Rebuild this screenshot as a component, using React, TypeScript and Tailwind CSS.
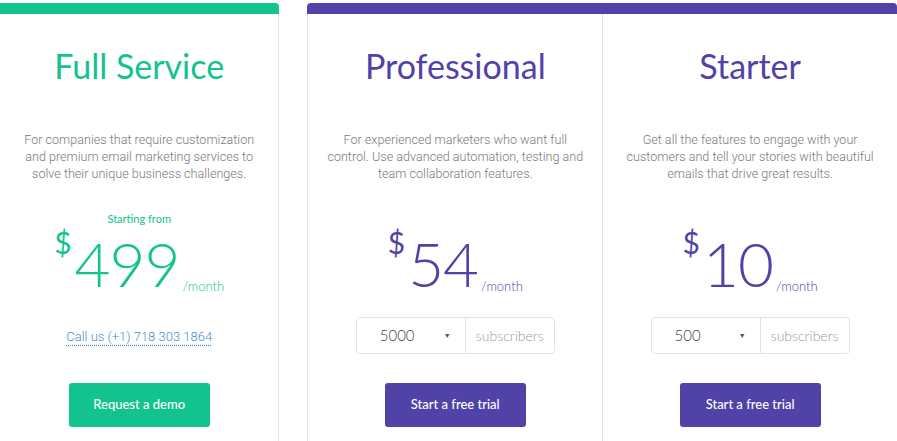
const heading = { fontFamily: 'Lato, "Noto Sans", sans-serif' };

type Plan = {
    title: string;
    lines: string[];
    price: string;
    tone: 'green' | 'purple';
    subs?: string;
};

function Price({ price, color }: { price: string; color: string }) {
    return (
        <div className={`flex items-start justify-center ${color}`} style={heading}>
            <span className="text-[30px] leading-none mr-[3px]">$</span>
            <span className="text-[62px] leading-none mt-[5px] font-light tracking-[-1px]">{price}</span>
            <span className="self-end text-[13px] leading-none mb-[1px] ml-[3px] font-light">/month</span>
        </div>
    );
}

function SubscriberSelect({ value }: { value: string }) {
    return (
        <div className="flex h-[37px] w-[199px] mx-auto border border-[#e3e3e3] rounded-[4px] text-[15px]" style={heading}>
            <div className="w-[109px] flex items-center justify-between pl-[23px] pr-[14px] border-r border-[#e3e3e3] text-[#444] font-light">
                <span>{value}</span>
                <span className="text-[7px] text-[#555]">▼</span>
            </div>
            <div className="flex-1 flex items-center justify-center text-[#999] text-[14px] font-light">subscribers</div>
        </div>
    );
}

function Column({ plan, extra }: { plan: Plan; extra?: boolean }) {
    const text = plan.tone === 'green' ? 'text-[#13c38e]' : 'text-[#5142a8]';
    const bg = plan.tone === 'green' ? 'bg-[#13c38e]' : 'bg-[#5142a8]';
    return (
        <div className="flex-1 flex flex-col items-center text-center">
            <h2 className={`mt-[28px] text-[34px] leading-[48px] ${text}`} style={heading}>{plan.title}</h2>
            <p className="mt-[41px] text-[12.6px] leading-[17px] text-[#7a7a7a] font-light" style={{ fontFamily: 'Roboto, sans-serif' }}>
                {plan.lines.map((l) => (
                    <span key={l} className="block">{l}</span>
                ))}
            </p>
            <div className={`mt-[28px] h-[17px] text-[11px] leading-[17px] ${text}`} style={heading}>
                {extra ? 'Starting from' : ''}
            </div>
            <div className="mt-0">
                <Price price={plan.price} color={text} />
            </div>
            <div className="mt-[22px] h-[38px] flex items-center justify-center w-full">
                {plan.subs ? (
                    <SubscriberSelect value={plan.subs} />
                ) : (
                    <a className="mt-[4px] text-[13px] text-[#4b8fcc] underline decoration-dotted underline-offset-[4px] font-light" style={{ fontFamily: 'Roboto, sans-serif' }}>
                        Call us (+1) 718 303 1864
                    </a>
                )}
            </div>
            <button
                className={`mt-[29px] h-[44px] w-[141px] rounded-[3px] ${bg} text-white text-[13px] font-medium`}
                style={heading}
            >
                {extra ? 'Request a demo' : 'Start a free trial'}
            </button>
        </div>
    );
}

export default function App() {
    const full: Plan = {
        title: 'Full Service',
        lines: ['For companies that require customization', 'and premium email marketing services to', 'solve their unique business challenges.'],
        price: '499',
        tone: 'green',
    };
    const pro: Plan = {
        title: 'Professional',
        lines: ['For experienced marketers who want full', 'control. Use advanced automation, testing and', 'team collaboration features.'],
        price: '54',
        tone: 'purple',
        subs: '5000',
    };
    const starter: Plan = {
        title: 'Starter',
        lines: ['Get all the features to engage with your', 'customers and tell your stories with beautiful', 'emails that drive great results.'],
        price: '10',
        tone: 'purple',
        subs: '500',
    };

    return (
        <div className="w-[897px] h-[441px] overflow-hidden bg-white pt-[3px] flex gap-[28px]">
            {/* Full service card */}
            <div className="w-[280px] flex flex-col">
                <div className="h-[11px] bg-[#13c38e] rounded-tr-[4px]" />
                <div className="flex-1 flex border-r border-[#e4e4e4]">
                    <Column plan={full} extra />
                </div>
            </div>

            {/* Self-serve plans */}
            <div className="w-[591px] flex flex-col">
                <div className="h-[11px] bg-[#5142a8] rounded-t-[4px]" />
                <div className="flex-1 flex border-l border-[#e4e4e4]">
                    <Column plan={pro} />
                    <div className="w-px bg-[#e4e4e4]" />
                    <Column plan={starter} />
                </div>
            </div>
        </div>
    );
}
